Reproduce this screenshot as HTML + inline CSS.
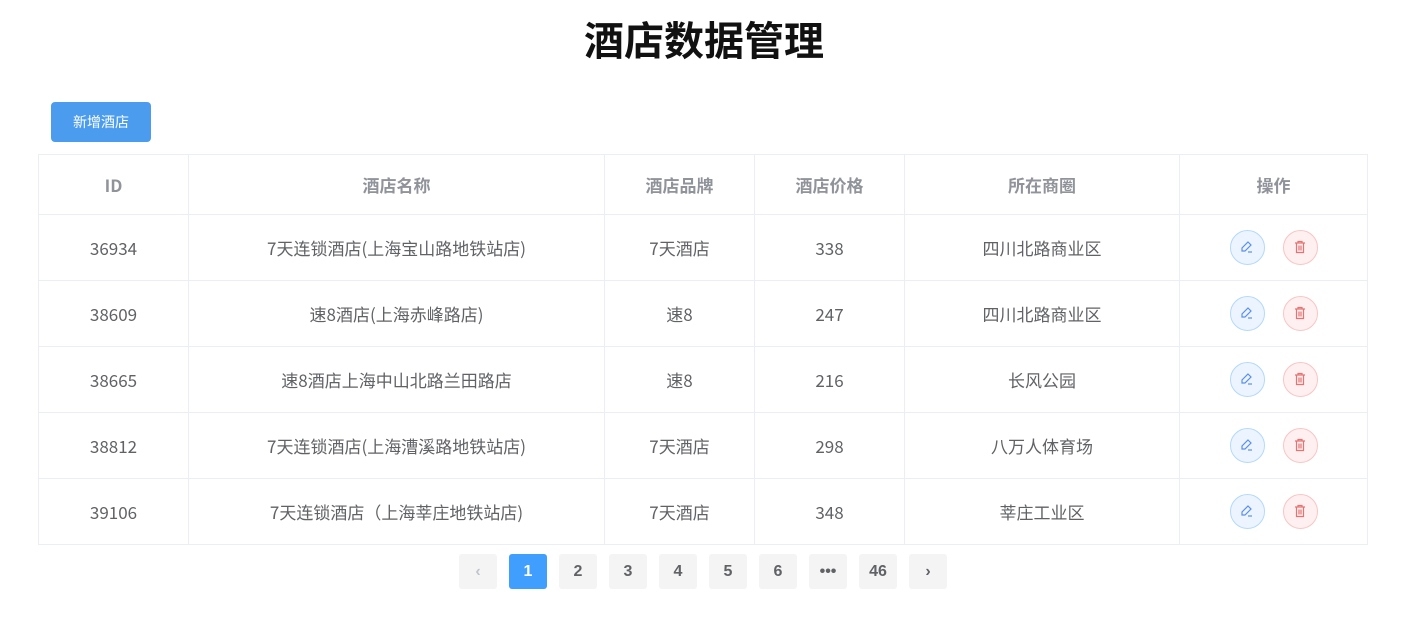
<!DOCTYPE html>
<html><head><meta charset="utf-8"><style>
body{margin:0;width:1408px;height:627px;background:#fff;font-family:"Noto Sans CJK SC","Liberation Sans",sans-serif;position:relative;overflow:hidden}
h1{position:absolute;top:13px;left:0;width:1408px;text-align:center;margin:0;font-size:40px;font-weight:bold;color:#111;line-height:50px}
.btn{position:absolute;left:51px;top:102px;width:100px;height:40px;background:#4b9cee;border-radius:4px;color:#fff;font-size:14px;text-align:center;line-height:40px}
table{position:absolute;left:38px;top:154px;border-collapse:collapse;table-layout:fixed;width:1329px}
td,th{border:1px solid #ebeef5;text-align:center;color:#606266;font-size:17px;font-weight:normal;padding:0;line-height:24px}
th{height:59px;color:#909399;font-weight:bold;font-size:17px}
td{height:65px}
.ic{display:inline-block;width:35px;height:35px;border-radius:50%;vertical-align:middle;margin:0 9px;box-sizing:border-box;line-height:0}
.e{background:#ecf5ff;border:1px solid #b3d8ff}
.d{background:#fef0f0;border:1px solid #fbc4c4}
.ic svg{margin-top:8px}
.pg{position:absolute;top:554px;width:38px;height:35px;background:#f4f4f5;border-radius:3px;text-align:center;line-height:35px;font-weight:bold;font-size:16px;color:#606266;font-family:"Liberation Sans",sans-serif}
.pg.a{background:#409eff;color:#fff}
</style></head><body>
<h1>酒店数据管理</h1>
<div class="btn">新增酒店</div>
<table>
<colgroup><col style="width:150px"><col style="width:416px"><col style="width:150px"><col style="width:150px"><col style="width:275px"><col style="width:188px"></colgroup>
<tr><th>ID</th><th>酒店名称</th><th>酒店品牌</th><th>酒店价格</th><th>所在商圈</th><th>操作</th></tr>
<tr><td>36934</td><td>7天连锁酒店(上海宝山路地铁站店)</td><td>7天酒店</td><td>338</td><td>四川北路商业区</td><td>ICONS</td></tr>
<tr><td>38609</td><td>速8酒店(上海赤峰路店)</td><td>速8</td><td>247</td><td>四川北路商业区</td><td>ICONS</td></tr>
<tr><td>38665</td><td>速8酒店上海中山北路兰田路店</td><td>速8</td><td>216</td><td>长风公园</td><td>ICONS</td></tr>
<tr><td>38812</td><td>7天连锁酒店(上海漕溪路地铁站店)</td><td>7天酒店</td><td>298</td><td>八万人体育场</td><td>ICONS</td></tr>
<tr><td>39106</td><td>7天连锁酒店（上海莘庄地铁站店)</td><td>7天酒店</td><td>348</td><td>莘庄工业区</td><td>ICONS</td></tr>
</table>
<div class="pg" style="left:459px;color:#c0c4cc">‹</div>
<div class="pg a" style="left:509px">1</div>
<div class="pg" style="left:559px">2</div>
<div class="pg" style="left:609px">3</div>
<div class="pg" style="left:659px">4</div>
<div class="pg" style="left:709px">5</div>
<div class="pg" style="left:759px">6</div>
<div class="pg" style="left:809px">•••</div>
<div class="pg" style="left:859px">46</div>
<div class="pg" style="left:909px">›</div>
<script>
var h='<span class="ic e"><svg width="16" height="16" viewBox="0 0 16 16" fill="none" stroke="#5b8fe8" stroke-width="1.2"><path d="M9 3l3 3-6 6H3v-3z"/><path d="M9 13h4"/></svg></span><span class="ic d"><svg width="16" height="16" viewBox="0 0 16 16" fill="none" stroke="#e57373" stroke-width="1.2"><path d="M3 4h10M6 4V2.5h4V4M4.5 4v9.5h7V4M7 6.5v5M9 6.5v5"/></svg></span>';
document.querySelectorAll('td').forEach(function(t){if(t.textContent=='ICONS')t.innerHTML=h;});
</script>
</body></html>
